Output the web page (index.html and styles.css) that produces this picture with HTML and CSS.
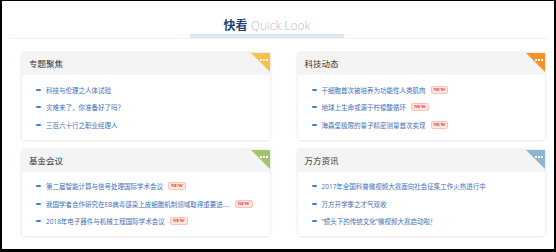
FILE: index.html
```html
<!DOCTYPE html>
<html lang="zh-CN">
<head>
  <meta charset="UTF-8" />
  <title>快看 Quick Look</title>
  <link rel="stylesheet" href="styles.css">
</head>
<body>
  <div class="frame">
    <div class="head">
      <div class="head-title"><b>快看</b> <span>Quick Look</span></div>
    </div>

    <div class="cards">
      <div class="card">
        <div class="card-head">专题聚焦<i class="corner yellow"></i><i class="dots"></i></div>
        <ul class="news">
          <li><a href="#">科技与伦理之人体试验</a></li>
          <li><a href="#">灾难来了，你准备好了吗？</a></li>
          <li><a href="#">三百六十行之职业经理人</a></li>
        </ul>
      </div>

      <div class="card">
        <div class="card-head">科技动态<i class="corner orange"></i><i class="dots"></i></div>
        <ul class="news">
          <li><a href="#">干细胞首次被培养为功能性人类肌肉</a><em class="new">NEW</em></li>
          <li><a href="#">地球上生命或源于柠檬酸循环</a><em class="new">NEW</em></li>
          <li><a href="#">海森堡极限的量子精密测量首次实现</a><em class="new">NEW</em></li>
        </ul>
      </div>

      <div class="card">
        <div class="card-head">基金会议<i class="corner green"></i><i class="dots"></i></div>
        <ul class="news">
          <li><a href="#">第二届智能计算与信号处理国际学术会议</a><em class="new">NEW</em></li>
          <li><a href="#">我国学者合作研究在EB病毒感染上皮细胞机制领域取得重要进....</a><em class="new">NEW</em></li>
          <li><a href="#">2018年电子器件与机械工程国际学术会议</a><em class="new">NEW</em></li>
        </ul>
      </div>

      <div class="card">
        <div class="card-head">万方资讯<i class="corner blue"></i><i class="dots"></i></div>
        <ul class="news">
          <li><a href="#">2017年全国科普微视频大赛面向社会征集工作火热进行中</a></li>
          <li><a href="#">万方开学季之才气双收</a></li>
          <li><a href="#">“镜头下的传统文化”微视频大赛启动啦！</a></li>
        </ul>
      </div>
    </div>
  </div>
</body>
</html>
```

FILE: styles.css
```css
html, body {
  margin: 0;
  padding: 0;
  background: #000;
}

body {
  font-family: 'Open Sans', 'Noto Sans CJK SC', sans-serif;
}

.frame {
  box-sizing: border-box;
  width: 556px;
  height: 252px;
  background: #fff;
  border-style: solid;
  border-color: #000;
  border-width: 1px 2px 3px 2px;
}

.head {
  margin: 0 6px;
  padding: 16px 22px 0 0;
  display: flex;
  justify-content: center;
  border-bottom: 1px solid #eef1f5;
}

.head-title {
  width: 154px;
  text-align: center;
  font-size: 12px;
  line-height: 17px;
  border-bottom: 4px solid #dfe5ef;
}

.head-title b {
  color: #1d4677;
}

.head-title span {
  color: #bdbdbd;
  font-weight: 300;
}

.cards {
  display: grid;
  grid-template-columns: 1fr 1fr;
  column-gap: 28px;
  row-gap: 10px;
  padding: 14px 9px 0 20px;
}

.card {
  position: relative;
  background: #fff;
  box-shadow: 0 0 3px rgba(0, 0, 0, 0.16);
  overflow: hidden;
}

.card-head {
  height: 22px;
  line-height: 22px;
  padding-left: 7px;
  background: #f4f4f4;
  font-size: 8.5px;
  color: #333;
}

.corner {
  position: absolute;
  top: 0;
  right: 0;
  width: 0;
  height: 0;
  border-top: 19px solid #f9c04a;
  border-left: 19px solid transparent;
}

.corner.orange { border-top-color: #f39325; }
.corner.green { border-top-color: #a3c26d; }
.corner.blue { border-top-color: #8db4d5; }

.dots {
  position: absolute;
  top: 6px;
  right: 8px;
  width: 2px;
  height: 2px;
  background: #fff;
  box-shadow: 3px 0 #fff, 6px 0 #fff;
}

.news {
  list-style: none;
  margin: 0;
  padding: 6px 0 6px 14px;
}

.news li {
  display: flex;
  align-items: center;
  height: 17.5px;
  font-size: 6.5px;
}

.news li::before {
  content: "";
  width: 5px;
  height: 2px;
  margin-right: 5px;
  background: #3f7fd0;
  border-radius: 1px;
}

.news a {
  color: #3d6fb6;
  text-decoration: none;
  white-space: nowrap;
}

.new {
  margin-left: 5px;
  padding: 0 2px;
  height: 6px;
  line-height: 6px;
  font-size: 5px;
  font-style: normal;
  font-weight: bold;
  font-family: 'Liberation Serif', serif;
  color: #e2301c;
  background: #fde6e0;
  border: 1px solid #f6c3b6;
  border-radius: 2px;
}
```
